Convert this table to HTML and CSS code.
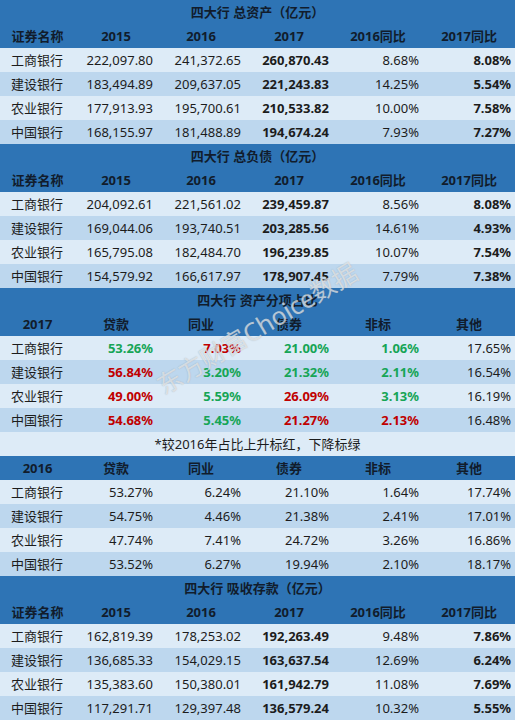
FILE: index.html
```html
<!DOCTYPE html>
<html lang="zh-CN">
<head>
    <meta charset="UTF-8">
    <meta name="viewport" content="width=device-width, initial-scale=1.0">
    <title>四大行 数据</title>
    <link rel="stylesheet" href="styles.css">
</head>
<body>

<div class="sheet">
    <table class="grid">
        <colgroup>
            <col class="c1"><col class="c2"><col class="c3"><col class="c4"><col class="c5"><col class="c6">
        </colgroup>

        <!-- 总资产 -->
        <tr class="head"><td colspan="6" class="title">四大行 总资产（亿元）</td></tr>
        <tr class="head">
            <td>证券名称</td><td>2015</td><td>2016</td><td>2017</td><td>2016同比</td><td>2017同比</td>
        </tr>
        <tr class="light"><td class="name">工商银行</td><td>222,097.80</td><td>241,372.65</td><td class="b">260,870.43</td><td>8.68%</td><td class="b">8.08%</td></tr>
        <tr class="dark"><td class="name">建设银行</td><td>183,494.89</td><td>209,637.05</td><td class="b">221,243.83</td><td>14.25%</td><td class="b">5.54%</td></tr>
        <tr class="light"><td class="name">农业银行</td><td>177,913.93</td><td>195,700.61</td><td class="b">210,533.82</td><td>10.00%</td><td class="b">7.58%</td></tr>
        <tr class="dark"><td class="name">中国银行</td><td>168,155.97</td><td>181,488.89</td><td class="b">194,674.24</td><td>7.93%</td><td class="b">7.27%</td></tr>

        <!-- 总负债 -->
        <tr class="head"><td colspan="6" class="title">四大行 总负债（亿元）</td></tr>
        <tr class="head">
            <td>证券名称</td><td>2015</td><td>2016</td><td>2017</td><td>2016同比</td><td>2017同比</td>
        </tr>
        <tr class="light"><td class="name">工商银行</td><td>204,092.61</td><td>221,561.02</td><td class="b">239,459.87</td><td>8.56%</td><td class="b">8.08%</td></tr>
        <tr class="dark"><td class="name">建设银行</td><td>169,044.06</td><td>193,740.51</td><td class="b">203,285.56</td><td>14.61%</td><td class="b">4.93%</td></tr>
        <tr class="light"><td class="name">农业银行</td><td>165,795.08</td><td>182,484.70</td><td class="b">196,239.85</td><td>10.07%</td><td class="b">7.54%</td></tr>
        <tr class="dark"><td class="name">中国银行</td><td>154,579.92</td><td>166,617.97</td><td class="b">178,907.45</td><td>7.79%</td><td class="b">7.38%</td></tr>

        <!-- 资产分项占比 2017 -->
        <tr class="head"><td colspan="6" class="title">四大行 资产分项占比</td></tr>
        <tr class="head">
            <td>2017</td><td>贷款</td><td>同业</td><td>债券</td><td>非标</td><td>其他</td>
        </tr>
        <tr class="light"><td class="name">工商银行</td><td class="b down">53.26%</td><td class="b up">7.03%</td><td class="b down">21.00%</td><td class="b down">1.06%</td><td>17.65%</td></tr>
        <tr class="dark"><td class="name">建设银行</td><td class="b up">56.84%</td><td class="b down">3.20%</td><td class="b down">21.32%</td><td class="b down">2.11%</td><td>16.54%</td></tr>
        <tr class="light"><td class="name">农业银行</td><td class="b up">49.00%</td><td class="b down">5.59%</td><td class="b up">26.09%</td><td class="b down">3.13%</td><td>16.19%</td></tr>
        <tr class="dark"><td class="name">中国银行</td><td class="b up">54.68%</td><td class="b down">5.45%</td><td class="b up">21.27%</td><td class="b up">2.13%</td><td>16.48%</td></tr>
        <tr class="light"><td colspan="6" class="note">*较2016年占比上升标红，下降标绿</td></tr>

        <!-- 资产分项占比 2016 -->
        <tr class="head">
            <td>2016</td><td>贷款</td><td>同业</td><td>债券</td><td>非标</td><td>其他</td>
        </tr>
        <tr class="light"><td class="name">工商银行</td><td>53.27%</td><td>6.24%</td><td>21.10%</td><td>1.64%</td><td>17.74%</td></tr>
        <tr class="dark"><td class="name">建设银行</td><td>54.75%</td><td>4.46%</td><td>21.38%</td><td>2.41%</td><td>17.01%</td></tr>
        <tr class="light"><td class="name">农业银行</td><td>47.74%</td><td>7.41%</td><td>24.72%</td><td>3.26%</td><td>16.86%</td></tr>
        <tr class="dark"><td class="name">中国银行</td><td>53.52%</td><td>6.27%</td><td>19.94%</td><td>2.10%</td><td>18.17%</td></tr>

        <!-- 吸收存款 -->
        <tr class="head"><td colspan="6" class="title">四大行 吸收存款（亿元）</td></tr>
        <tr class="head">
            <td>证券名称</td><td>2015</td><td>2016</td><td>2017</td><td>2016同比</td><td>2017同比</td>
        </tr>
        <tr class="light"><td class="name">工商银行</td><td>162,819.39</td><td>178,253.02</td><td class="b">192,263.49</td><td>9.48%</td><td class="b">7.86%</td></tr>
        <tr class="dark"><td class="name">建设银行</td><td>136,685.33</td><td>154,029.15</td><td class="b">163,637.54</td><td>12.69%</td><td class="b">6.24%</td></tr>
        <tr class="light"><td class="name">农业银行</td><td>135,383.60</td><td>150,380.01</td><td class="b">161,942.79</td><td>11.08%</td><td class="b">7.69%</td></tr>
        <tr class="dark"><td class="name">中国银行</td><td>117,291.71</td><td>129,397.48</td><td class="b">136,579.24</td><td>10.32%</td><td class="b">5.55%</td></tr>
    </table>

    <div class="watermark">东方财富Choice数据</div>
</div>

</body>
</html>
```

FILE: styles.css
```css
body {
    margin: 0;
    padding: 0;
    background-color: #ffffff;
    font-family: "Noto Sans", "Noto Sans CJK SC", sans-serif;
    font-size: 13px;
    color: #1c1c1c;
}

.sheet {
    position: relative;
    width: 515px;
    height: 721px;
    overflow: hidden;
}

.grid {
    width: 515px;
    border-collapse: collapse;
    table-layout: fixed;
}

.c1 { width: 75px; }
.c2 { width: 82px; }
.c3 { width: 88px; }
.c4 { width: 88px; }
.c5 { width: 90px; }
.c6 { width: 92px; }

.grid tr {
    height: 24px;
}

.grid td {
    padding: 0 4px 0 0;
    text-align: right;
    white-space: nowrap;
    line-height: 24px;
}

.grid td.name {
    text-align: left;
    padding-left: 11px;
}

.head {
    background-color: #2e74b5;
}

.head td {
    text-align: center;
    font-weight: bold;
    color: #111c2c;
    padding: 0;
}

.light {
    background-color: #ddebf7;
}

.dark {
    background-color: #bdd7ee;
}

.b {
    font-weight: bold;
}

.up {
    color: #c00000;
}

.down {
    color: #16a556;
}

.grid td.note {
    text-align: center;
    padding: 0;
}

/* 水印 */
.watermark {
    position: absolute;
    left: 158px;
    top: 368px;
    transform: rotate(-31deg);
    transform-origin: left center;
    font-size: 25px;
    color: rgba(255, 255, 255, 0.6);
    text-shadow: 0 0 1px rgba(110, 120, 130, 0.55);
    white-space: nowrap;
    pointer-events: none;
}
```
